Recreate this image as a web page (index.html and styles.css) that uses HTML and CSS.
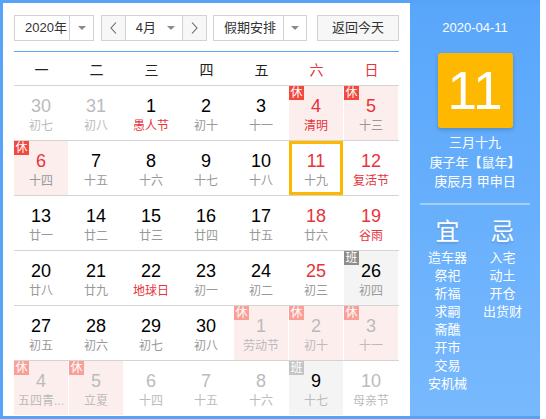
FILE: index.html
```html
<!DOCTYPE html>
<html lang="zh-CN">
<head>
<meta charset="utf-8">
<title>万年历</title>
<link rel="stylesheet" href="styles.css">
</head>
<body>
<div class="cal">
  <div class="main">
    <div class="toolbar">
      <div class="sel sel-year"><span class="sel-text">2020年</span><span class="sel-arrow"><i class="tri"></i></span></div>
      <div class="month-group">
        <span class="nav"><svg width="7" height="12" viewBox="0 0 7 12"><polyline points="6,0.5 1,6 6,11.5" fill="none" stroke="#666" stroke-width="1.1"/></svg></span>
        <span class="sel-month"><span class="sel-text">4月</span><i class="tri"></i></span>
        <span class="nav"><svg width="7" height="12" viewBox="0 0 7 12"><polyline points="1,0.5 6,6 1,11.5" fill="none" stroke="#666" stroke-width="1.1"/></svg></span>
      </div>
      <div class="sel sel-holiday"><span class="sel-text">假期安排</span><span class="sel-arrow"><i class="tri"></i></span></div>
      <div class="today-btn">返回今天</div>
    </div>
    <div class="weekdays">
      <span>一</span><span>二</span><span>三</span><span>四</span><span>五</span><span class="red">六</span><span class="red">日</span>
    </div>
    <div class="week">
      <div class="cell other"><b>30</b><em>初七</em></div>
      <div class="cell other"><b>31</b><em>初八</em></div>
      <div class="cell"><b>1</b><em class="fest">愚人节</em></div>
      <div class="cell"><b>2</b><em>初十</em></div>
      <div class="cell"><b>3</b><em>十一</em></div>
      <div class="cell rest"><i class="tag">休</i><b class="red">4</b><em class="fest">清明</em></div>
      <div class="cell rest"><i class="tag">休</i><b class="red">5</b><em>十三</em></div>
    </div>
    <div class="week">
      <div class="cell rest"><i class="tag">休</i><b class="red">6</b><em>十四</em></div>
      <div class="cell"><b>7</b><em>十五</em></div>
      <div class="cell"><b>8</b><em>十六</em></div>
      <div class="cell"><b>9</b><em>十七</em></div>
      <div class="cell"><b>10</b><em>十八</em></div>
      <div class="cell today"><b class="red">11</b><em>十九</em></div>
      <div class="cell"><b class="red">12</b><em class="fest">复活节</em></div>
    </div>
    <div class="week">
      <div class="cell"><b>13</b><em>廿一</em></div>
      <div class="cell"><b>14</b><em>廿二</em></div>
      <div class="cell"><b>15</b><em>廿三</em></div>
      <div class="cell"><b>16</b><em>廿四</em></div>
      <div class="cell"><b>17</b><em>廿五</em></div>
      <div class="cell"><b class="red">18</b><em>廿六</em></div>
      <div class="cell"><b class="red">19</b><em class="fest">谷雨</em></div>
    </div>
    <div class="week">
      <div class="cell"><b>20</b><em>廿八</em></div>
      <div class="cell"><b>21</b><em>廿九</em></div>
      <div class="cell"><b>22</b><em class="fest">地球日</em></div>
      <div class="cell"><b>23</b><em>初一</em></div>
      <div class="cell"><b>24</b><em>初二</em></div>
      <div class="cell"><b class="red">25</b><em>初三</em></div>
      <div class="cell work"><i class="tag">班</i><b>26</b><em>初四</em></div>
    </div>
    <div class="week">
      <div class="cell"><b>27</b><em>初五</em></div>
      <div class="cell"><b>28</b><em>初六</em></div>
      <div class="cell"><b>29</b><em>初七</em></div>
      <div class="cell"><b>30</b><em>初八</em></div>
      <div class="cell other rest"><i class="tag">休</i><b>1</b><em>劳动节</em></div>
      <div class="cell other rest"><i class="tag">休</i><b>2</b><em>初十</em></div>
      <div class="cell other rest"><i class="tag">休</i><b>3</b><em>十一</em></div>
    </div>
    <div class="week last">
      <div class="cell other rest"><i class="tag">休</i><b>4</b><em class="clip">五四青...</em></div>
      <div class="cell other rest"><i class="tag">休</i><b>5</b><em>立夏</em></div>
      <div class="cell other"><b>6</b><em>十四</em></div>
      <div class="cell other"><b>7</b><em>十五</em></div>
      <div class="cell other"><b>8</b><em>十六</em></div>
      <div class="cell other work"><i class="tag">班</i><b class="dark">9</b><em>十七</em></div>
      <div class="cell other"><b>10</b><em>母亲节</em></div>
    </div>
  </div>
  <div class="side">
    <div class="side-date">2020-04-11</div>
    <div class="big-day">11</div>
    <div class="side-lines">
      <div>三月十九</div>
      <div>庚子年【鼠年】</div>
      <div>庚辰月 甲申日</div>
    </div>
    <div class="side-rule"></div>
    <div class="yiji">
      <div class="yj-col">
        <div class="yj-title">宜</div>
        <div>造车器</div><div>祭祀</div><div>祈福</div><div>求嗣</div><div>斋醮</div><div>开市</div><div>交易</div><div>安机械</div>
      </div>
      <div class="yj-col">
        <div class="yj-title">忌</div>
        <div>入宅</div><div>动土</div><div>开仓</div><div>出货财</div>
      </div>
    </div>
  </div>
</div>
</body>
</html>
```

FILE: styles.css
```css
* { box-sizing: border-box; margin: 0; padding: 0; }
body {
  margin: 0;
  background: #fff;
  font-family: "Liberation Sans", "Noto Sans CJK SC", sans-serif;
}
.cal {
  width: 540px;
  height: 419px;
  border: 3px solid #57a3f7;
  border-right: 0;
  display: flex;
}
.main {
  width: 407px;
  background: #fff;
  padding: 12px 11px 0 11px;
}
.toolbar {
  display: flex;
  height: 26px;
  margin-bottom: 10px;
  font-size: 13px;
  color: #333;
}
.sel {
  display: flex;
  height: 26px;
  border: 1px solid #d2d2d2;
  background: #fff;
}
.sel-text {
  line-height: 24px;
  padding-left: 10px;
}
.sel-year { width: 80px; }
.sel-year .sel-text { width: 54px; }
.sel-arrow {
  flex: 1;
  border-left: 1px solid #d2d2d2;
  display: flex;
  align-items: center;
  justify-content: center;
}
.tri {
  display: block;
  width: 0;
  height: 0;
  border-left: 4px solid transparent;
  border-right: 4px solid transparent;
  border-top: 4px solid #8a8a8a;
}
.month-group {
  display: flex;
  height: 26px;
  margin-left: 7px;
  width: 106px;
  border: 1px solid #d2d2d2;
}
.nav {
  width: 23px;
  background: #f7f7f7;
  display: flex;
  align-items: center;
  justify-content: center;
}
.sel-month {
  width: 59px;
  border-left: 1px solid #d2d2d2;
  border-right: 1px solid #d2d2d2;
  display: flex;
  align-items: center;
  justify-content: space-between;
  padding-right: 7px;
}
.sel-holiday { width: 94px; margin-left: 6px; }
.sel-holiday .sel-text { width: 69px; }
.today-btn {
  width: 82px;
  height: 26px;
  margin-left: 10px;
  border: 1px solid #d2d2d2;
  background: #f7f7f7;
  text-align: center;
  line-height: 24px;
}
.weekdays {
  display: grid;
  grid-template-columns: repeat(7, 55px);
  height: 35px;
  border-top: 1px solid #5ea6f5;
  border-bottom: 1px solid #d4d4d4;
  font-size: 14px;
  color: #222;
  align-items: center;
  justify-items: center;
}
.red { color: #e8333b; }
.week {
  display: grid;
  grid-template-columns: repeat(7, 54px);
  column-gap: 1px;
  height: 55px;
  border-bottom: 1px solid #d4d4d4;
}
.week.last { border-bottom: 0; height: 54px; }
.cell {
  position: relative;
  height: 54px;
  text-align: center;
  padding-top: 10px;
}
.cell b {
  display: block;
  font-weight: normal;
  font-size: 18px;
  line-height: 20px;
  color: #000;
}
.cell em {
  display: block;
  font-style: normal;
  font-size: 12px;
  line-height: 14px;
  margin-top: 3px;
  color: #999;
  white-space: nowrap;
}
.cell em.clip { letter-spacing: 0; }
.cell b.red { color: #e8333b; }
.cell em.fest { color: #e8333b; }
.cell.other b { color: #bbb; }
.cell.other em { color: #bbb; }
.cell.other b.dark { color: #000; }
.rest { background: #fdeeee; }
.work { background: #f4f4f4; }
.tag {
  position: absolute;
  left: 0;
  top: 0;
  width: 15px;
  height: 14px;
  font-style: normal;
  font-size: 12px;
  line-height: 14px;
  color: #fff;
  text-align: center;
  background: #f4473d;
}
.work .tag { background: #8c8c8c; }
.other.rest .tag { background: #fa9f98; }
.other.work .tag { background: #c4c4c4; }
.today {
  border: 3px solid #ffb800;
  padding-top: 7px;
}
.side {
  flex: 1;
  background: linear-gradient(#58a6fb, #78b9fd);
  color: #fff;
  text-align: center;
  padding-top: 15px;
}
.side-date {
  font-size: 13px;
  line-height: 20px;
}
.big-day {
  width: 75px;
  height: 75px;
  margin: 15px auto 0;
  background: #ffb800;
  border-radius: 3px;
  box-shadow: 0 2px 4px rgba(0, 0, 0, 0.18);
  font-size: 53px;
  line-height: 75px;
}
.side-lines {
  margin-top: 5px;
  font-size: 13px;
  line-height: 19.5px;
}
.side-rule {
  width: 110px;
  height: 2px;
  margin: 11px auto 0;
  background: rgba(255, 255, 255, 0.4);
}
.yiji {
  display: flex;
  justify-content: center;
  margin-top: 12px;
}
.yj-col {
  width: 55px;
  font-size: 13px;
  line-height: 18px;
}
.yj-title {
  font-size: 24px;
  line-height: 30px;
  margin-bottom: 2px;
  text-shadow: 0 2px 2px rgba(0, 0, 0, 0.12);
}
```
